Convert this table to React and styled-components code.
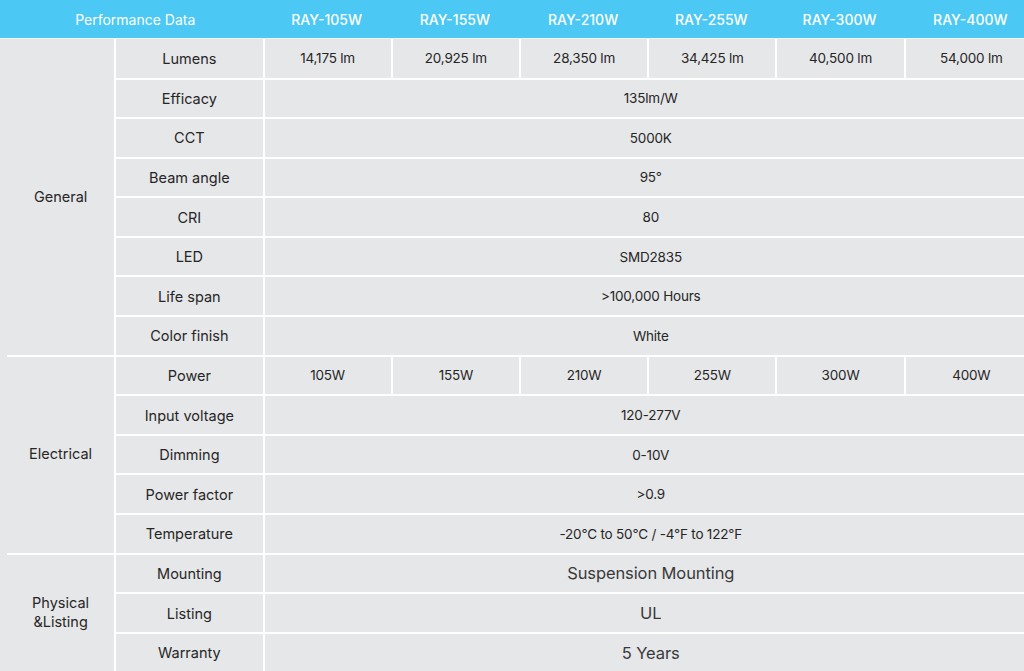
import React from 'react'
import styled, { createGlobalStyle } from 'styled-components'

const GlobalStyle = createGlobalStyle`
  html, body {
    margin: 0;
    padding: 0;
    background: #e6e7e9;
    overflow: hidden;
  }
  body {
    font-family: Inter, "Liberation Sans", Arial, sans-serif;
  }
`

const Table = styled.table`
  width: 1037px;
  table-layout: fixed;
  border-collapse: separate;
  border-spacing: 0;
  background: #e6e7e9;
  color: #262626;
`

const HeadCell = styled.th`
  height: 38px;
  padding: ${(p) => (p.$title ? '0 0 0 8px' : '0')};
  background: #4bc8f4;
  color: #fff;
  font-size: 14px;
  font-weight: ${(p) => (p.$title ? 400 : 500)};
  text-align: center;
  border-bottom: 1px solid #f2f4f6;
`

const Row = styled.tr`
  height: ${(p) => (p.$first ? '38.5px' : '39.6px')};
`

const GroupCell = styled.td`
  padding: 0 0 0 7px;
  text-align: center;
  font-size: 14.5px;
  line-height: 19px;
  background: ${(p) =>
    p.$first
      ? '#e6e7e9'
      : 'linear-gradient(#fff, #fff) 7px 0 / calc(100% - 7px) 2px no-repeat, #e6e7e9'};
`

const LabelCell = styled.td`
  padding: 0;
  text-align: center;
  font-size: 14.5px;
  border-left: 2px solid #fff;
  border-top: ${(p) => (p.$first ? 'none' : '2px solid #fff')};
`

const ValueCell = styled.td`
  padding: 0;
  text-align: center;
  font-size: ${(p) => (p.$big ? '16.5px' : '13.5px')};
  color: ${(p) => (p.$big ? '#3a3a3a' : '#262626')};
  letter-spacing: ${(p) => (p.$big ? '-0.1px' : '-0.2px')};
  border-left: 2px solid #fff;
  border-top: ${(p) => (p.$first ? 'none' : '2px solid #fff')};
`

const models = ['RAY-105W', 'RAY-155W', 'RAY-210W', 'RAY-255W', 'RAY-300W', 'RAY-400W']

const groups = [
  {
    name: 'General',
    rows: [
      ['Lumens', ['14,175 lm', '20,925 lm', '28,350 lm', '34,425 lm', '40,500 lm', '54,000 lm']],
      ['Efficacy', '135lm/W'],
      ['CCT', '5000K'],
      ['Beam angle', '95°'],
      ['CRI', '80'],
      ['LED', 'SMD2835'],
      ['Life span', '>100,000 Hours'],
      ['Color finish', 'White'],
    ],
  },
  {
    name: 'Electrical',
    rows: [
      ['Power', ['105W', '155W', '210W', '255W', '300W', '400W']],
      ['Input voltage', '120-277V'],
      ['Dimming', '0-10V'],
      ['Power factor', '>0.9'],
      ['Temperature', '-20°C to 50°C / -4°F to 122°F'],
    ],
  },
  {
    name: ['Physical', '&Listing'],
    big: true,
    rows: [
      ['Mounting', 'Suspension Mounting'],
      ['Listing', 'UL'],
      ['Warranty', '5 Years'],
    ],
  },
]

const colWidths = [128, 128, 128, 128, 128, 133]

export default function App() {
  return (
    <>
      <GlobalStyle />
      <Table>
        <colgroup>
          <col style={{ width: 114 }} />
          <col style={{ width: 148 }} />
          {colWidths.map((w, i) => (
            <col key={i} style={{ width: w }} />
          ))}
        </colgroup>
        <thead>
          <tr>
            <HeadCell colSpan={2} $title>
              Performance Data
            </HeadCell>
            {models.map((m) => (
              <HeadCell key={m}>{m}</HeadCell>
            ))}
          </tr>
        </thead>
        <tbody>
          {groups.map((g, gi) =>
            g.rows.map(([label, value], ri) => {
              const first = gi === 0 && ri === 0
              return (
                <Row key={label} $first={first}>
                  {ri === 0 && (
                    <GroupCell rowSpan={g.rows.length} $first={gi === 0}>
                      {Array.isArray(g.name)
                        ? g.name.map((n) => <div key={n}>{n}</div>)
                        : g.name}
                    </GroupCell>
                  )}
                  <LabelCell $first={first}>{label}</LabelCell>
                  {Array.isArray(value) ? (
                    value.map((v) => (
                      <ValueCell key={v} $first={first}>
                        {v}
                      </ValueCell>
                    ))
                  ) : (
                    <ValueCell colSpan={6} $first={first} $big={g.big}>
                      {value}
                    </ValueCell>
                  )}
                </Row>
              )
            })
          )}
        </tbody>
      </Table>
    </>
  )
}
